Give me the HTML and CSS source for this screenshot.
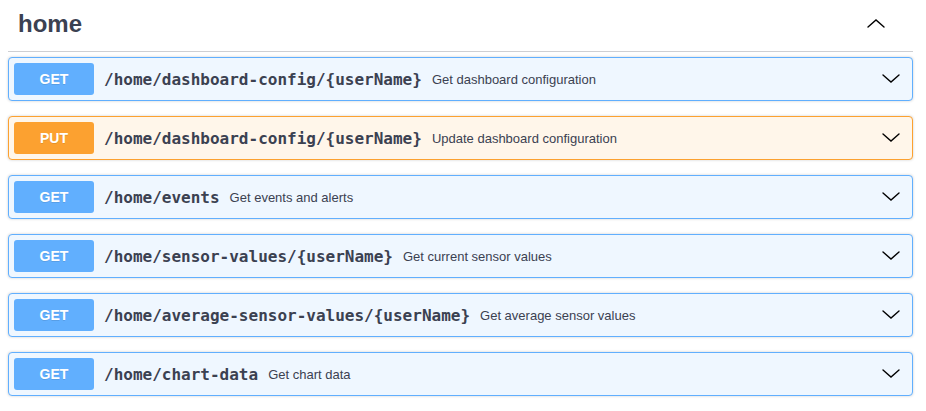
FILE: index.html
```html
<!DOCTYPE html>
<html>
<head>
<meta charset="utf-8">
<link rel="stylesheet" href="styles.css">
</head>
<body>
<div class="wrapper">
  <div class="tag">
    <h3 class="tag-title">home</h3>
    <svg class="arrow" width="20" height="20" viewBox="0 0 20 20"><polyline points="2,12 10,5 18,12"/></svg>
  </div>

  <div class="op get">
    <span class="method">GET</span>
    <span class="path">/home/dashboard-config/{userName}</span>
    <span class="desc">Get dashboard configuration</span>
    <svg class="arrow" width="20" height="20" viewBox="0 0 20 20"><polyline points="2,6 10,13 18,6"/></svg>
  </div>
  <div class="op put">
    <span class="method">PUT</span>
    <span class="path">/home/dashboard-config/{userName}</span>
    <span class="desc">Update dashboard configuration</span>
    <svg class="arrow" width="20" height="20" viewBox="0 0 20 20"><polyline points="2,6 10,13 18,6"/></svg>
  </div>
  <div class="op get">
    <span class="method">GET</span>
    <span class="path">/home/events</span>
    <span class="desc">Get events and alerts</span>
    <svg class="arrow" width="20" height="20" viewBox="0 0 20 20"><polyline points="2,6 10,13 18,6"/></svg>
  </div>
  <div class="op get">
    <span class="method">GET</span>
    <span class="path">/home/sensor-values/{userName}</span>
    <span class="desc">Get current sensor values</span>
    <svg class="arrow" width="20" height="20" viewBox="0 0 20 20"><polyline points="2,6 10,13 18,6"/></svg>
  </div>
  <div class="op get">
    <span class="method">GET</span>
    <span class="path">/home/average-sensor-values/{userName}</span>
    <span class="desc">Get average sensor values</span>
    <svg class="arrow" width="20" height="20" viewBox="0 0 20 20"><polyline points="2,6 10,13 18,6"/></svg>
  </div>
  <div class="op get">
    <span class="method">GET</span>
    <span class="path">/home/chart-data</span>
    <span class="desc">Get chart data</span>
    <svg class="arrow" width="20" height="20" viewBox="0 0 20 20"><polyline points="2,6 10,13 18,6"/></svg>
  </div>
</div>
</body>
</html>
```
FILE: styles.css
```css
html, body {
  margin: 0;
  padding: 0;
  background: #fff;
}
.wrapper {
  padding: 0 13px 0 8px;
  font-family: "Liberation Sans", Arial, sans-serif;
  color: #3b4151;
}
.tag {
  display: flex;
  align-items: center;
  height: 51px;
  padding: 0 27px 0 10px;
  border-bottom: 1px solid rgba(59, 65, 81, 0.25);
  margin-bottom: 5px;
}
.tag-title {
  flex: 1;
  margin: 0 0 4px 0;
  font-size: 24px;
  font-weight: bold;
  color: #3b4151;
}
.arrow {
  flex: none;
  display: block;
}
.tag .arrow {
  margin-bottom: 1px;
}
.arrow polyline {
  fill: none;
  stroke: #000;
  stroke-width: 1.4;
  stroke-linecap: round;
  stroke-linejoin: miter;
}
.op {
  display: flex;
  align-items: center;
  height: 42px;
  padding: 0 11px 0 5px;
  margin-bottom: 15px;
  border: 1px solid #61affe;
  border-radius: 4px;
  background: #eff7ff;
  box-shadow: 0 0 3px rgba(0, 0, 0, 0.19);
}
.op.put {
  border-color: #fca130;
  background: #fff6ea;
}
.method {
  flex: none;
  display: flex;
  align-items: center;
  justify-content: center;
  width: 80px;
  height: 32px;
  border-radius: 3px;
  background: #61affe;
  color: #fff;
  font-size: 14px;
  font-weight: bold;
  text-shadow: 0 1px 0 rgba(0, 0, 0, 0.1);
}
.put .method {
  background: #fca130;
}
.path {
  padding: 0 10px;
  font-family: "DejaVu Sans Mono", monospace;
  font-size: 16px;
  font-weight: bold;
  color: #3b4151;
}
.desc {
  flex: 1;
  font-size: 13px;
  color: #3b4151;
}
```
